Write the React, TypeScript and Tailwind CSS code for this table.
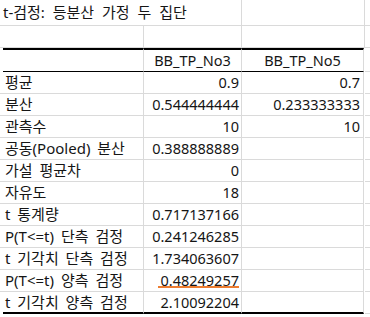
import React from 'react';

const rows: [string, string, string, boolean?][] = [
    ['평균', '0.9', '0.7'],
    ['분산', '0.544444444', '0.233333333'],
    ['관측수', '10', '10'],
    ['공동(Pooled) 분산', '0.388888889', ''],
    ['가설 평균차', '0', ''],
    ['자유도', '18', ''],
    ['t 통계량', '0.717137166', ''],
    ['P(T<=t) 단측 검정', '0.241246285', ''],
    ['t 기각치 단측 검정', '1.734063607', ''],
    ['P(T<=t) 양측 검정', '0.48249257', '', true],
    ['t 기각치 양측 검정', '2.10092204', ''],
];

const cols = 'grid grid-cols-[144px_98px_123px_1fr]';
const cell = 'border-r border-b border-[#dadada]';

const App: React.FC = () => {
    return (
        <div className="w-[370px] h-[317px] overflow-hidden bg-white text-[14.5px] text-[#151515] font-['Noto_Sans','Noto_Sans_CJK_KR',sans-serif] leading-none">
            {/* title row */}
            <div className={`${cols} h-[26px]`}>
                <div className="col-span-2 border-r border-b border-[#dadada] flex items-center pl-[3px] whitespace-nowrap text-[15px] [word-spacing:4px]">
                    t-검정: 등분산 가정 두 집단
                </div>
                <div className={cell}></div>
                <div className="border-b border-[#dadada]"></div>
            </div>
            {/* empty row */}
            <div className={`${cols} h-[22px]`}>
                <div className={cell}></div>
                <div className={cell}></div>
                <div className={cell}></div>
                <div className="border-b border-[#dadada]"></div>
            </div>
            {/* header */}
            <div className={`${cols} h-[24px]`}>
                <div className="border-t-2 border-b border-t-black border-b-black border-r border-r-[#dadada] ml-[3px]"></div>
                <div className="border-t-2 border-b border-t-black border-b-black border-r border-r-[#dadada] flex items-center justify-center">BB_TP_No3</div>
                <div className="border-t-2 border-b border-t-black border-b-black border-r border-r-[#dadada] flex items-center justify-center mr-[1px]">BB_TP_No5</div>
                <div className="border-b border-[#dadada]"></div>
            </div>
            {rows.map(([label, a, b, mark], i) => {
                const last = i === rows.length - 1;
                const bottom = last ? 'border-b-2 border-b-black' : 'border-b border-b-[#dadada]';
                return (
                    <div key={label} className={`${cols} h-[22px]`}>
                        <div className={`border-r border-r-[#dadada] ${bottom} flex items-center whitespace-nowrap text-[15px] [word-spacing:3px] ${last ? 'ml-[3px] pl-[2px]' : 'pl-[5px]'}`}>{label}</div>
                        <div className={`relative border-r border-r-[#dadada] ${bottom} flex items-center justify-end px-[2px]`}>
                            {a}
                            {mark && <span className="absolute left-[14px] right-[2px] bottom-[3px] h-[2px] bg-[#ed7d31]"></span>}
                        </div>
                        <div className={`border-r border-r-[#dadada] ${bottom} flex items-center justify-end px-[3px] mr-[1px]`}>{b}</div>
                        <div className="border-b border-[#dadada]"></div>
                    </div>
                );
            })}
        </div>
    );
};

export default App;
